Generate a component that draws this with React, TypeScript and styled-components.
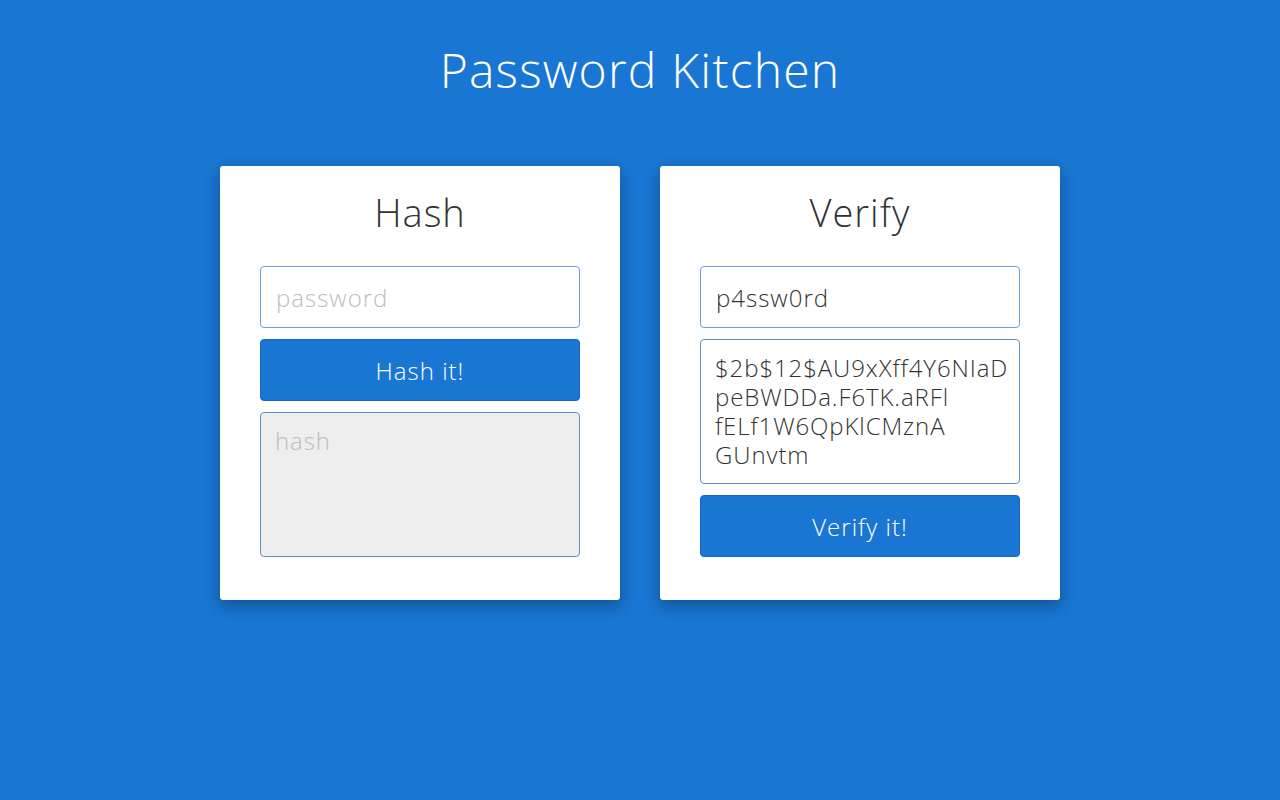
import React, { useState } from "react";
import styled, { createGlobalStyle } from "styled-components";

const GlobalStyle = createGlobalStyle`
  html, body {
    margin: 0;
    padding: 0;
    background: #1976d2;
    font-family: "Open Sans", "Liberation Sans", sans-serif;
    font-weight: 300;
  }
  * { box-sizing: border-box; }
`;

const S = {
  Page: styled.div`
    min-height: 100vh;
    display: flex;
    flex-direction: column;
    align-items: center;
  `,
  Title: styled.h1`
    margin: 41px 0 0;
    font-size: 48px;
    line-height: 58px;
    font-weight: 300;
    letter-spacing: 1.2px;
    color: #ffffff;
  `,
  Cards: styled.div`
    margin-top: 67px;
    display: flex;
    gap: 40px;
    align-items: flex-start;
  `,
  Card: styled.section`
    width: 400px;
    padding: 22px 40px 43px;
    background: #ffffff;
    border-radius: 3px;
    box-shadow: 0 6px 16px rgba(0, 0, 0, 0.3);
    display: flex;
    flex-direction: column;
  `,
  Heading: styled.h2`
    margin: 0 0 30px;
    text-align: center;
    font-size: 38px;
    line-height: 48px;
    font-weight: 300;
    letter-spacing: 1px;
    color: #333333;
  `,
  Stack: styled.div`
    display: flex;
    flex-direction: column;
    gap: 11px;
  `,
  Input: styled.input`
    height: 62px;
    width: 100%;
    padding: 0 15px;
    border: 1px solid #6f9fcf;
    border-radius: 4px;
    font-family: inherit;
    font-weight: 300;
    font-size: 24px;
    letter-spacing: 1px;
    color: #333333;
    background: #ffffff;
    outline: none;
    &::placeholder {
      color: #bdbdbd;
    }
  `,
  TextArea: styled.textarea<{ $readOnlyLook?: boolean }>`
    height: 145px;
    width: 100%;
    padding: 13px 4px 13px 14px;
    border: 1px solid #5f93c8;
    border-radius: 4px;
    font-family: inherit;
    font-weight: 300;
    font-size: 24px;
    line-height: 29px;
    letter-spacing: 0.9px;
    color: #333333;
    white-space: pre;
    resize: none;
    overflow: hidden;
    outline: none;
    background: ${({ $readOnlyLook }) => ($readOnlyLook ? "#eeeeee" : "#ffffff")};
    &::placeholder {
      color: #bdbdbd;
    }
  `,
  Button: styled.button`
    height: 62px;
    width: 100%;
    border: 1px solid #1565c0;
    border-radius: 4px;
    background: #1976d2;
    color: #ffffff;
    font-family: inherit;
    font-weight: 300;
    font-size: 24px;
    letter-spacing: 1px;
    cursor: pointer;
  `,
};

const SAMPLE_HASH = [
  "$2b$12$AU9xXff4Y6NIaD",
  "peBWDDa.F6TK.aRFl",
  "fELf1W6QpKlCMznA",
  "GUnvtm",
].join("\n");

const App: React.FC = () => {
  const [password, setPassword] = useState("");
  const [verifyPassword, setVerifyPassword] = useState("p4ssw0rd");
  const [verifyHash, setVerifyHash] = useState(SAMPLE_HASH);

  return (
    <>
      <GlobalStyle />
      <S.Page>
        <S.Title>Password Kitchen</S.Title>
        <S.Cards>
          <S.Card>
            <S.Heading>Hash</S.Heading>
            <S.Stack>
              <S.Input
                placeholder="password"
                value={password}
                onChange={(e) => setPassword(e.target.value)}
              />
              <S.Button type="button">Hash it!</S.Button>
              <S.TextArea placeholder="hash" readOnly $readOnlyLook />
            </S.Stack>
          </S.Card>
          <S.Card>
            <S.Heading>Verify</S.Heading>
            <S.Stack>
              <S.Input
                placeholder="password"
                value={verifyPassword}
                onChange={(e) => setVerifyPassword(e.target.value)}
              />
              <S.TextArea
                placeholder="hash"
                value={verifyHash}
                onChange={(e) => setVerifyHash(e.target.value)}
              />
              <S.Button type="button">Verify it!</S.Button>
            </S.Stack>
          </S.Card>
        </S.Cards>
      </S.Page>
    </>
  );
};

export default App;
